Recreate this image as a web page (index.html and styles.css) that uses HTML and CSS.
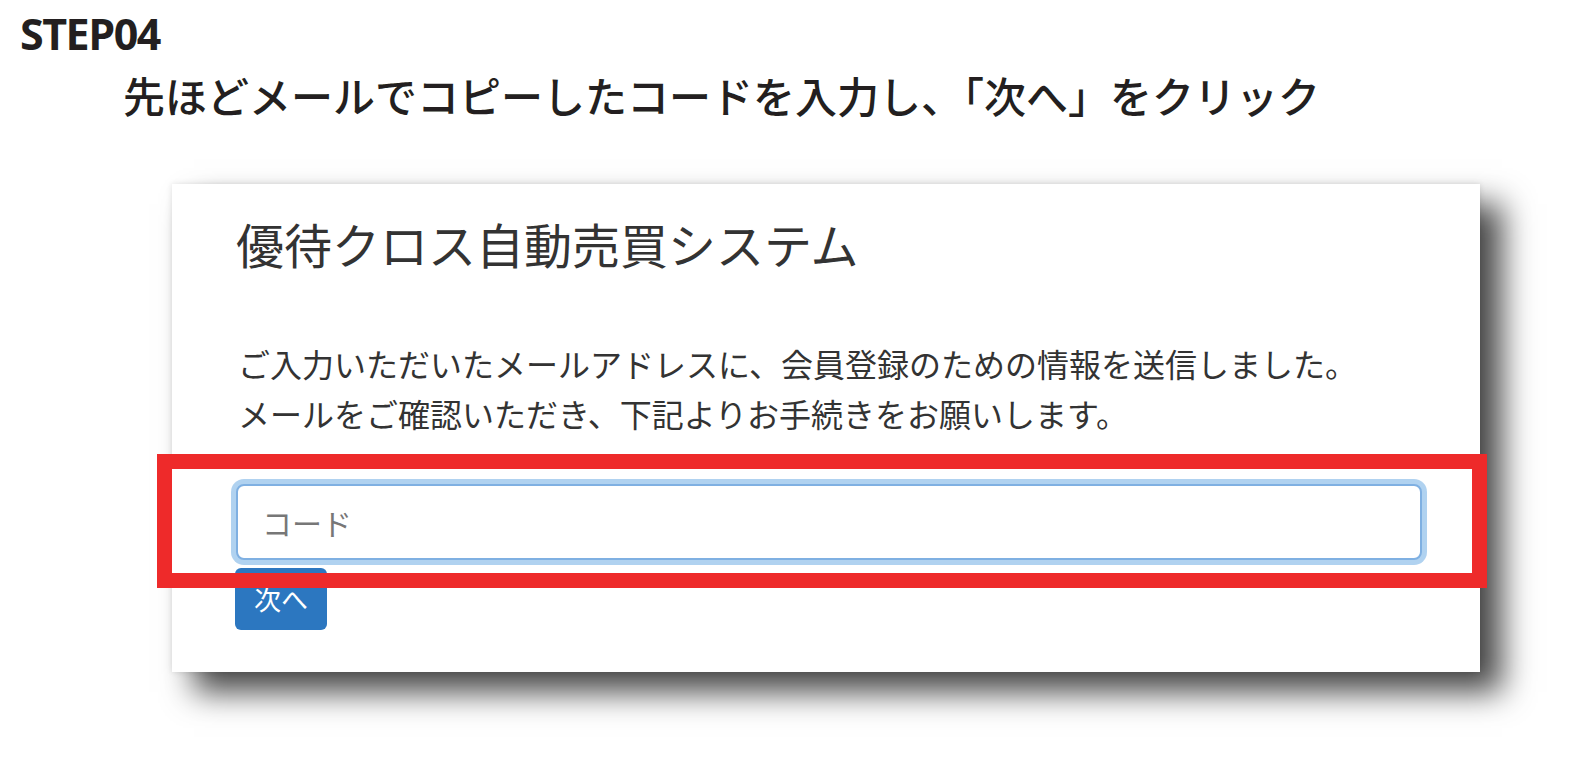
FILE: index.html
```html
<!DOCTYPE html>
<html lang="ja">
<head>
<meta charset="utf-8">
<title>STEP04</title>
<link rel="stylesheet" href="styles.css">
</head>
<body>
<header class="step">
  <h1 class="step-label">STEP04</h1>
  <p class="step-text">先ほどメールでコピーしたコードを入力し、「次へ」をクリック</p>
</header>
<main class="card">
  <h2 class="card-title">優待クロス自動売買システム</h2>
  <p class="card-text">ご入力いただいたメールアドレスに、会員登録のための情報を送信しました。<br>メールをご確認いただき、下記よりお手続きをお願いします。</p>
  <form class="code-form">
    <input class="code-input" type="text" placeholder="コード">
    <button class="next-btn" type="button">次へ</button>
  </form>
  <div class="highlight"></div>
</main>
</body>
</html>
```
FILE: styles.css
```css
html, body {
  margin: 0;
  padding: 0;
  background: #ffffff;
}

body {
  width: 1574px;
  height: 761px;
  overflow: hidden;
  font-family: "Noto Sans CJK JP", "Noto Sans", sans-serif;
}

.step {
  display: flex;
  flex-direction: column;
}

.step-label {
  margin: 12px 0 0 20px;
  font-family: "Open Sans", "Noto Sans", sans-serif;
  font-weight: 700;
  font-size: 43px;
  line-height: 43px;
  letter-spacing: -1.5px;
  color: #231f20;
}

.step-text {
  margin: 19px 0 0 123px;
  font-size: 42px;
  line-height: 41px;
  color: #231f20;
  font-weight: 500;
}

.card {
  position: relative;
  box-sizing: border-box;
  margin: 69px 0 0 172px;
  width: 1308px;
  height: 488px;
  padding: 36px 58px 0 64px;
  background: #ffffff;
  box-shadow: 22px 20px 30px rgba(0, 0, 0, 0.72), 0 0 6px rgba(0, 0, 0, 0.12);
}

.card-title {
  margin: 0;
  font-size: 48px;
  line-height: 47px;
  font-weight: 400;
  color: #333333;
}

.card-text {
  margin: 71px 0 0 2px;
  font-size: 32px;
  line-height: 50px;
  color: #333333;
}

.code-form {
  display: flex;
  flex-direction: column;
  align-items: flex-start;
  margin-top: 46px;
}

.code-input {
  box-sizing: border-box;
  width: 100%;
  height: 76px;
  margin: 0;
  padding: 0 24px;
  border: 2px solid #7fb0e2;
  border-radius: 8px;
  box-shadow: 0 0 0 5px rgba(150, 195, 235, 0.75);
  font-family: "Noto Sans CJK JP", "Noto Sans", sans-serif;
  font-size: 30px;
  color: #333333;
  outline: none;
  background: #ffffff;
}

.code-input::placeholder {
  color: #777777;
}

.next-btn {
  margin: 8px 0 0 -1px;
  width: 92px;
  height: 62px;
  padding: 0;
  border: none;
  border-radius: 6px;
  background: #2c77c0;
  color: #ffffff;
  font-family: "Noto Sans CJK JP", "Noto Sans", sans-serif;
  font-size: 27px;
  line-height: 62px;
}

.highlight {
  position: absolute;
  left: -15px;
  top: 270px;
  width: 1330px;
  height: 134px;
  box-sizing: border-box;
  border: 15px solid #ee2a2a;
  pointer-events: none;
}
```
